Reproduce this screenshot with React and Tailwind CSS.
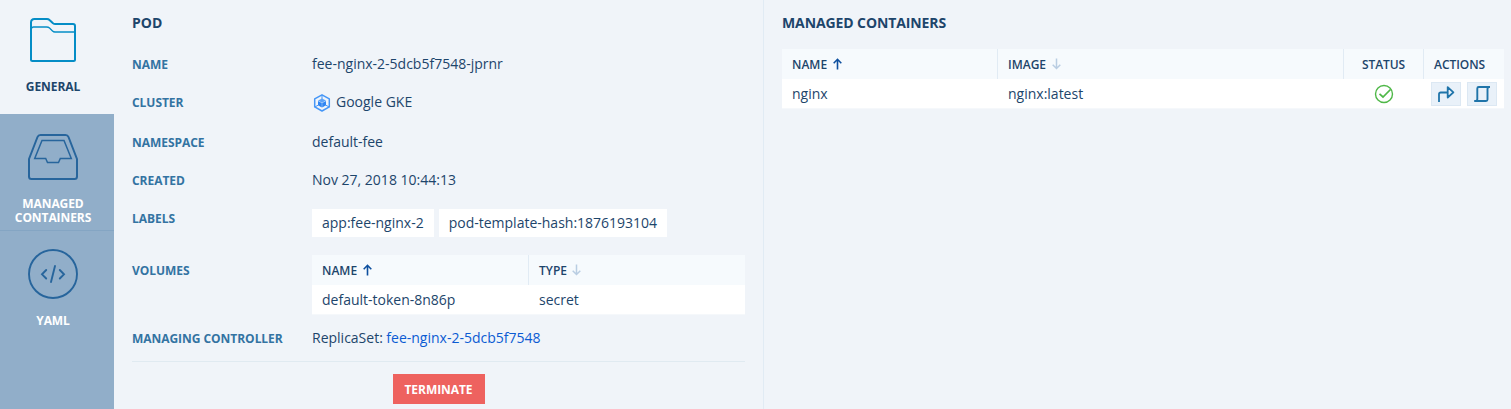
import React from "react";

function FolderIcon() {
  return (
    <svg width="50" height="50" viewBox="0 0 50 50" fill="none" stroke="#058dc6" strokeLinejoin="round">
      <path strokeWidth="2" d="M3 43.500V6.500Q3 3 6.500 3H19Q20.500 3 21.500 4L25 7.300Q26 8 27.200 8H45Q47 8 47 10V43.500Q47 45 45.500 45H4.500Q3 45 3 43.500Z" />
      <path strokeWidth="1.300" d="M3.500 12.500Q3.800 11 5.500 11H18.500Q20.500 11 21.500 12L24.500 15Q25.500 16 27 16H46.500" />
    </svg>
  );
}

function TrayIcon() {
  return (
    <svg width="50" height="50" viewBox="0 0 50 50" fill="none" stroke="#27659c" strokeLinejoin="round">
      <path strokeWidth="2" d="M1 26L9.500 4Q10.300 2 12.500 2H37.500Q39.700 2 40.500 4L49 26V43.500Q49 46 46.500 46H3.500Q1 46 1 43.500Z" />
      <path strokeWidth="1.500" strokeLinejoin="miter" d="M14 7.500H36L43.300 25.500H32.300L30.500 29.500H19.500L17.700 25.500H6.700Z" />
    </svg>
  );
}

function CodeIcon() {
  return (
    <svg width="50" height="50" viewBox="0 0 50 50" fill="none" stroke="#27659c">
      <circle cx="25" cy="25" r="24" strokeWidth="1.900" />
      <path strokeWidth="1.900" strokeLinecap="round" d="M18.200 21L14 25.300L18.200 29.500M31.800 21L36 25.300L31.800 29.500M27 17L23 33" />
    </svg>
  );
}

function GkeIcon() {
  return (
    <svg className="mt-px" width="20" height="20" viewBox="0 0 20 20" fill="none">
      <path stroke="#4596f7" strokeWidth="1.500" strokeLinejoin="round" d="M10 1.800L17.300 5.900V13.900L10 18L2.700 13.900V5.900Z" />
      <path stroke="#4596f7" strokeWidth="1" d="M10 2V6M3 13.900L6.500 12M17 13.900L13.500 12" />
      <path fill="#5ba2f8" d="M10 5.400L14 7.500L10 9.700L6 7.500Z" />
      <path fill="#2f86f3" d="M6 7.900L9.800 10V14.400L6 12.300ZM14 7.900L10.200 10V14.400L14 12.300Z" />
    </svg>
  );
}

function SortArrow({ active }) {
  return active ? (
    <svg className="mb-[3px] ml-[5.5px]" width="9" height="12" viewBox="0 0 9 12" fill="none" stroke="#0d4f9e" strokeWidth="1.600">
      <path d="M4.500 11.500V1.500M0.700 5.200L4.500 1.300L8.300 5.200" />
    </svg>
  ) : (
    <svg className="mb-[3px] ml-[5.5px]" width="9" height="12" viewBox="0 0 9 12" fill="none" stroke="#b9cde2" strokeWidth="1.500">
      <path d="M4.500 0.500V10.300M0.700 6.700L4.500 10.500L8.300 6.700" />
    </svg>
  );
}

function CheckIcon() {
  return (
    <svg width="20" height="20" viewBox="0 0 20 20" fill="none" stroke="#4fb848">
      <circle cx="10" cy="10" r="8.500" strokeWidth="1.400" />
      <path strokeWidth="1.700" d="M5.500 9.800L9 13L16.500 5.500" />
    </svg>
  );
}

function ShareIcon() {
  return (
    <svg width="18" height="18" viewBox="0 0 18 18" fill="none" stroke="#1f74a9" strokeWidth="1.800" strokeLinejoin="round">
      <path d="M2 17V9.200Q2 7.500 3.700 7.500H10.500M10.700 2.200V12.500L16.400 7.300Z" />
    </svg>
  );
}

function ScrollIcon() {
  return (
    <svg width="18" height="18" viewBox="0 0 18 18" fill="none" stroke="#1f74a9" strokeWidth="1.900">
      <path d="M17 2H5.800Q4.300 2 4.300 3.500V14Q4.300 16 2.600 16H1.200M1.200 16H13Q14.500 16 14.500 14.500V4Q14.500 2 16.200 2" />
    </svg>
  );
}

function NavItem({ icon, children, className }) {
  return (
    <div className={`flex flex-col items-center pr-2 text-center text-[12px] leading-[14px] font-bold tracking-[-0.08px] ${className}`}>
      {icon}
      <div className="mt-[14px]">{children}</div>
    </div>
  );
}

function Row({ label, className, children }) {
  return (
    <div className={`flex ${className}`}>
      <div className="w-[180px] shrink-0 pt-px text-[12px] leading-5 font-bold tracking-[-0.04px] text-[#3373a2]">{label}</div>
      <div className="flex flex-1">{children}</div>
    </div>
  );
}

const th = "flex h-[30px] items-center px-2.5 pt-0.5 text-[12px] font-semibold";
const td = "flex h-[29px] items-center px-2.5";
const divider = "border-l border-[#e1ebf4]";

export default function App() {
  return (
    <div className="flex h-[409px] w-[1511px] overflow-hidden bg-[#f0f4f9] font-['Open_Sans',sans-serif] text-[14px] leading-5 text-[#1d456b] antialiased">
      <nav className="flex w-[114px] shrink-0 flex-col bg-[#91aec9] text-white">
        <NavItem icon={<FolderIcon />} className="h-[114px] bg-[#f0f4f9] pt-4 text-[#1d456b]">GENERAL</NavItem>
        <NavItem icon={<TrayIcon />} className="h-[117px] border-b border-[#84a5c3] pt-[19px]">
          MANAGED
          <br />
          CONTAINERS
        </NavItem>
        <NavItem icon={<CodeIcon />} className="pt-[18px] [&>div]:mt-[15px]">YAML</NavItem>
      </nav>

      <section className="w-[650px] shrink-0 border-r border-[#e1ebf4] px-[18px] pt-[13px]">
        <h2 className="text-[14px] leading-5 font-bold">POD</h2>
        <Row label="NAME" className="mt-[21px] h-[38px]">fee-nginx-2-5dcb5f7548-jprnr</Row>
        <Row label="CLUSTER" className="h-10">
          <GkeIcon />
          <span className="ml-1">Google GKE</span>
        </Row>
        <Row label="NAMESPACE" className="h-[38px]">default-fee</Row>
        <Row label="CREATED" className="h-[38px]">Nov 27, 2018 10:44:13</Row>
        <Row label="LABELS" className="h-[52px]">
          <div className="mt-px flex h-7 gap-[5px]">
            <span className="flex items-center bg-white px-2.5">app:fee-nginx-2</span>
            <span className="flex items-center bg-white px-2.5">pod-template-hash:1876193104</span>
          </div>
        </Row>
        <Row label="VOLUMES" className="h-[68px]">
          <div className="-mt-[5px] grid h-[60px] w-full grid-cols-[216px_217px] border-b border-[#f5f8fb] bg-white">
            <div className={`${th} bg-[#f6fafd]`}>NAME<SortArrow active /></div>
            <div className={`${th} ${divider} bg-[#f6fafd]`}>TYPE<SortArrow /></div>
            <div className={td}>default-token-8n86p</div>
            <div className={`${td} border-l border-transparent`}>secret</div>
          </div>
        </Row>
        <Row label="MANAGING CONTROLLER" className="h-[33px]">
          ReplicaSet:<a className="ml-[3.5px] text-[#0b5bd3]">fee-nginx-2-5dcb5f7548</a>
        </Row>
        <div className="flex justify-center border-t border-[#e0eaf1] pt-3">
          <button className="h-[30px] w-[92px] bg-[#ee625f] pt-0.5 text-[12px] font-bold tracking-[-0.06px] text-white">TERMINATE</button>
        </div>
      </section>

      <section className="flex-1 pt-[13px] pr-[7px] pl-[18px]">
        <h2 className="text-[14px] leading-5 font-bold tracking-[-0.1px]">MANAGED CONTAINERS</h2>
        <div className="mt-4 grid grid-cols-[215px_346px_80px_81px] border-b border-[#f5f8fb] bg-white">
          <div className={`${th} bg-[#f6fafd]`}>NAME<SortArrow active /></div>
          <div className={`${th} ${divider} bg-[#f6fafd]`}>IMAGE<SortArrow /></div>
          <div className={`${th} ${divider} justify-center bg-[#f6fafd] tracking-[-0.1px]`}>STATUS</div>
          <div className={`${th} ${divider} bg-[#f6fafd] tracking-[-0.05px]`}>ACTIONS</div>
          <div className={td}>nginx</div>
          <div className={`${td} border-l border-transparent`}>nginx:latest</div>
          <div className={`${td} justify-center border-l-2 border-transparent`}><CheckIcon /></div>
          <div className="flex h-[29px] items-center justify-end gap-1.5 pr-[7px]">
            <span className="flex h-6 w-[30px] items-center justify-center border border-[#dce8f3] bg-[#e9f1f9]"><ShareIcon /></span>
            <span className="flex h-6 w-[30px] items-center justify-center border border-[#dce8f3] bg-[#e9f1f9]"><ScrollIcon /></span>
          </div>
        </div>
      </section>
    </div>
  );
}
